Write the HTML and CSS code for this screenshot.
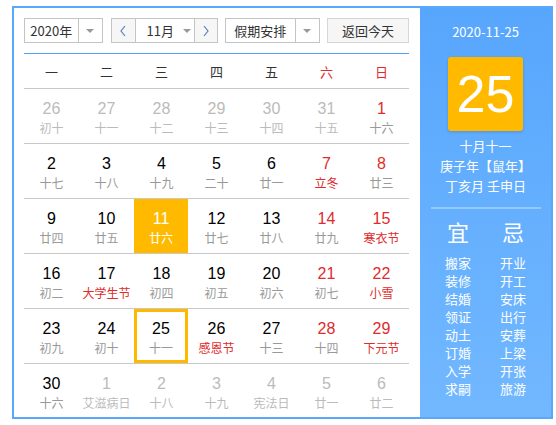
FILE: index.html
```html
<!DOCTYPE html>
<html lang="zh">
<head>
<meta charset="utf-8">
<link rel="stylesheet" href="styles.css">
</head>
<body>
<div class="calendar">
  <div class="main">
    <div class="toolbar">
      <div class="select year"><span class="sel-text">2020年</span><span class="sel-arrow"><i class="tri"></i></span></div>
      <div class="month-group">
        <span class="nav"><svg width="8" height="12" viewBox="0 0 8 12"><polyline points="6,1 2,6 6,11" fill="none" stroke="#5b7fb8" stroke-width="1.2"/></svg></span>
        <span class="month"><span>11月</span><i class="tri"></i></span>
        <span class="nav"><svg width="8" height="12" viewBox="0 0 8 12"><polyline points="2,1 6,6 2,11" fill="none" stroke="#5b7fb8" stroke-width="1.2"/></svg></span>
      </div>
      <div class="select holiday"><span class="sel-text">假期安排</span><span class="sel-arrow"><i class="tri"></i></span></div>
      <div class="btn-today">返回今天</div>
    </div>
    <div class="weekdays">
      <span>一</span><span>二</span><span>三</span><span>四</span><span>五</span><span class="red">六</span><span class="red">日</span>
    </div>
    <div class="row">
      <div class="cell other"><b>26</b><small>初十</small></div>
      <div class="cell other"><b>27</b><small>十一</small></div>
      <div class="cell other"><b>28</b><small>十二</small></div>
      <div class="cell other"><b>29</b><small>十三</small></div>
      <div class="cell other"><b>30</b><small>十四</small></div>
      <div class="cell other"><b>31</b><small>十五</small></div>
      <div class="cell weekend"><b>1</b><small>十六</small></div>
    </div>
    <div class="row">
      <div class="cell"><b>2</b><small>十七</small></div>
      <div class="cell"><b>3</b><small>十八</small></div>
      <div class="cell"><b>4</b><small>十九</small></div>
      <div class="cell"><b>5</b><small>二十</small></div>
      <div class="cell"><b>6</b><small>廿一</small></div>
      <div class="cell weekend"><b>7</b><small class="fest">立冬</small></div>
      <div class="cell weekend"><b>8</b><small>廿三</small></div>
    </div>
    <div class="row">
      <div class="cell"><b>9</b><small>廿四</small></div>
      <div class="cell"><b>10</b><small>廿五</small></div>
      <div class="cell selected"><b>11</b><small>廿六</small></div>
      <div class="cell"><b>12</b><small>廿七</small></div>
      <div class="cell"><b>13</b><small>廿八</small></div>
      <div class="cell weekend"><b>14</b><small>廿九</small></div>
      <div class="cell weekend"><b>15</b><small class="fest">寒衣节</small></div>
    </div>
    <div class="row">
      <div class="cell"><b>16</b><small>初二</small></div>
      <div class="cell"><b>17</b><small class="fest">大学生节</small></div>
      <div class="cell"><b>18</b><small>初四</small></div>
      <div class="cell"><b>19</b><small>初五</small></div>
      <div class="cell"><b>20</b><small>初六</small></div>
      <div class="cell weekend"><b>21</b><small>初七</small></div>
      <div class="cell weekend"><b>22</b><small class="fest">小雪</small></div>
    </div>
    <div class="row">
      <div class="cell"><b>23</b><small>初九</small></div>
      <div class="cell"><b>24</b><small>初十</small></div>
      <div class="cell today"><b>25</b><small>十一</small></div>
      <div class="cell"><b>26</b><small class="fest">感恩节</small></div>
      <div class="cell"><b>27</b><small>十三</small></div>
      <div class="cell weekend"><b>28</b><small>十四</small></div>
      <div class="cell weekend"><b>29</b><small class="fest">下元节</small></div>
    </div>
    <div class="row last">
      <div class="cell"><b>30</b><small>十六</small></div>
      <div class="cell other"><b>1</b><small>艾滋病日</small></div>
      <div class="cell other"><b>2</b><small>十八</small></div>
      <div class="cell other"><b>3</b><small>十九</small></div>
      <div class="cell other"><b>4</b><small>宪法日</small></div>
      <div class="cell other"><b>5</b><small>廿一</small></div>
      <div class="cell other"><b>6</b><small>廿二</small></div>
    </div>
  </div>
  <div class="side">
    <div class="side-date">2020-11-25</div>
    <div class="big-day">25</div>
    <div class="lunar">
      <div>十月十一</div>
      <div>庚子年【鼠年】</div>
      <div>丁亥月 壬申日</div>
    </div>
    <div class="divider"></div>
    <div class="yiji">
      <div class="col">
        <div class="yj-title">宜</div>
        <div>搬家</div><div>装修</div><div>结婚</div><div>领证</div><div>动土</div><div>订婚</div><div>入学</div><div>求嗣</div>
      </div>
      <div class="col">
        <div class="yj-title">忌</div>
        <div>开业</div><div>开工</div><div>安床</div><div>出行</div><div>安葬</div><div>上梁</div><div>开张</div><div>旅游</div>
      </div>
    </div>
  </div>
</div>
</body>
</html>
```

FILE: styles.css
```css
* { box-sizing: border-box; }
html, body { margin: 0; padding: 0; background: #fff; }
body {
  font-family: "Noto Sans CJK SC", "Liberation Sans", sans-serif;
  color: #333;
}
.calendar {
  margin: 6px 0 0 12px;
  width: 541px;
  height: 413px;
  border: 2px solid #5aa8fe;
  display: flex;
}
.main {
  width: 406px;
  padding: 10px 11px 0 10px;
}
.toolbar {
  display: flex;
  height: 25px;
  font-size: 13px;
}
.select {
  display: flex;
  border: 1px solid #c4c4c4;
  background: #fff;
}
.sel-text {
  display: flex;
  align-items: center;
  justify-content: center;
  border-right: 1px solid #c4c4c4;
}
.sel-arrow {
  width: 24px;
  display: flex;
  align-items: center;
  justify-content: center;
}
.tri {
  display: block;
  width: 0; height: 0;
  border-left: 4px solid transparent;
  border-right: 4px solid transparent;
  border-top: 4px solid #999;
}
.year { width: 79px; }
.year .sel-text { width: 55px; }
.holiday { width: 95px; margin-left: 7px; }
.holiday .sel-text { width: 71px; }
.month-group {
  display: flex;
  margin-left: 8px;
  border: 1px solid #c4c4c4;
  width: 107px;
}
.nav {
  width: 23px;
  background: #f6f6f6;
  display: flex;
  align-items: center;
  justify-content: center;
}
.month {
  width: 61px;
  border-left: 1px solid #c4c4c4;
  border-right: 1px solid #c4c4c4;
  display: flex;
  align-items: center;
  padding-left: 11px;
  gap: 9px;
}
.btn-today {
  margin-left: 7px;
  width: 82px;
  border: 1px solid #d6d6d6;
  background: #f6f6f6;
  display: flex;
  align-items: center;
  justify-content: center;
}
.weekdays {
  margin-top: 10px;
  border-top: 1px solid #4fa3fc;
  border-bottom: 1px solid #c8c8c8;
  height: 36px;
  display: flex;
  align-items: center;
  font-size: 13px;
  color: #333;
}
.weekdays span {
  width: 55px;
  text-align: center;
}
.red { color: #e02b2b; }
.row {
  display: flex;
  height: 55px;
  border-bottom: 1px solid #c8c8c8;
}
.row.last { border-bottom: 0; height: 54px; }
.cell {
  width: 55px;
  display: flex;
  flex-direction: column;
  align-items: center;
  padding-top: 10px;
}
.cell b {
  font-family: "Liberation Sans", sans-serif;
  font-weight: normal;
  font-size: 16px;
  line-height: 20px;
  color: #000;
}
.cell small {
  font-size: 12px;
  line-height: 18px;
  color: #999;
}
.cell.other b { color: #bbb; }
.cell.other small { color: #bbb; }
.cell.weekend b { color: #e02b2b; }
.cell small.fest { color: #e02b2b; }
.cell.selected {
  background: #ffba00;
  margin-right: 1px;
  width: 54px;
}
.cell.selected b, .cell.selected small { color: #fff; }
.cell.today {
  border: 3px solid #ffba00;
  width: 54px;
  height: 54px;
  margin-right: 1px;
  padding-top: 7px;
}
.side {
  width: 131px;
  background: linear-gradient(#57a6fd, #72b8ff);
  color: #fff;
  display: flex;
  flex-direction: column;
  align-items: center;
}
.side-date {
  margin-top: 15px;
  font-size: 13px;
  line-height: 18px;
}
.big-day {
  margin-top: 16px;
  width: 75px;
  height: 74px;
  background: #ffba00;
  border-radius: 3px;
  box-shadow: 0 1px 3px rgba(0,0,0,0.15);
  font-family: "Liberation Sans", sans-serif;
  font-size: 52px;
  line-height: 74px;
  text-align: center;
}
.lunar {
  margin-top: 5px;
  font-size: 13px;
  line-height: 20px;
  text-align: center;
}
.divider {
  margin-top: 11px;
  width: 110px;
  height: 2px;
  background: #94c9ff;
}
.yiji {
  display: flex;
  margin-top: 9px;
}
.col {
  width: 55px;
  display: flex;
  flex-direction: column;
  align-items: center;
  font-size: 13px;
  line-height: 18px;
}
.yj-title {
  font-size: 22px;
  line-height: 26px;
  margin-bottom: 10px;
}
```
